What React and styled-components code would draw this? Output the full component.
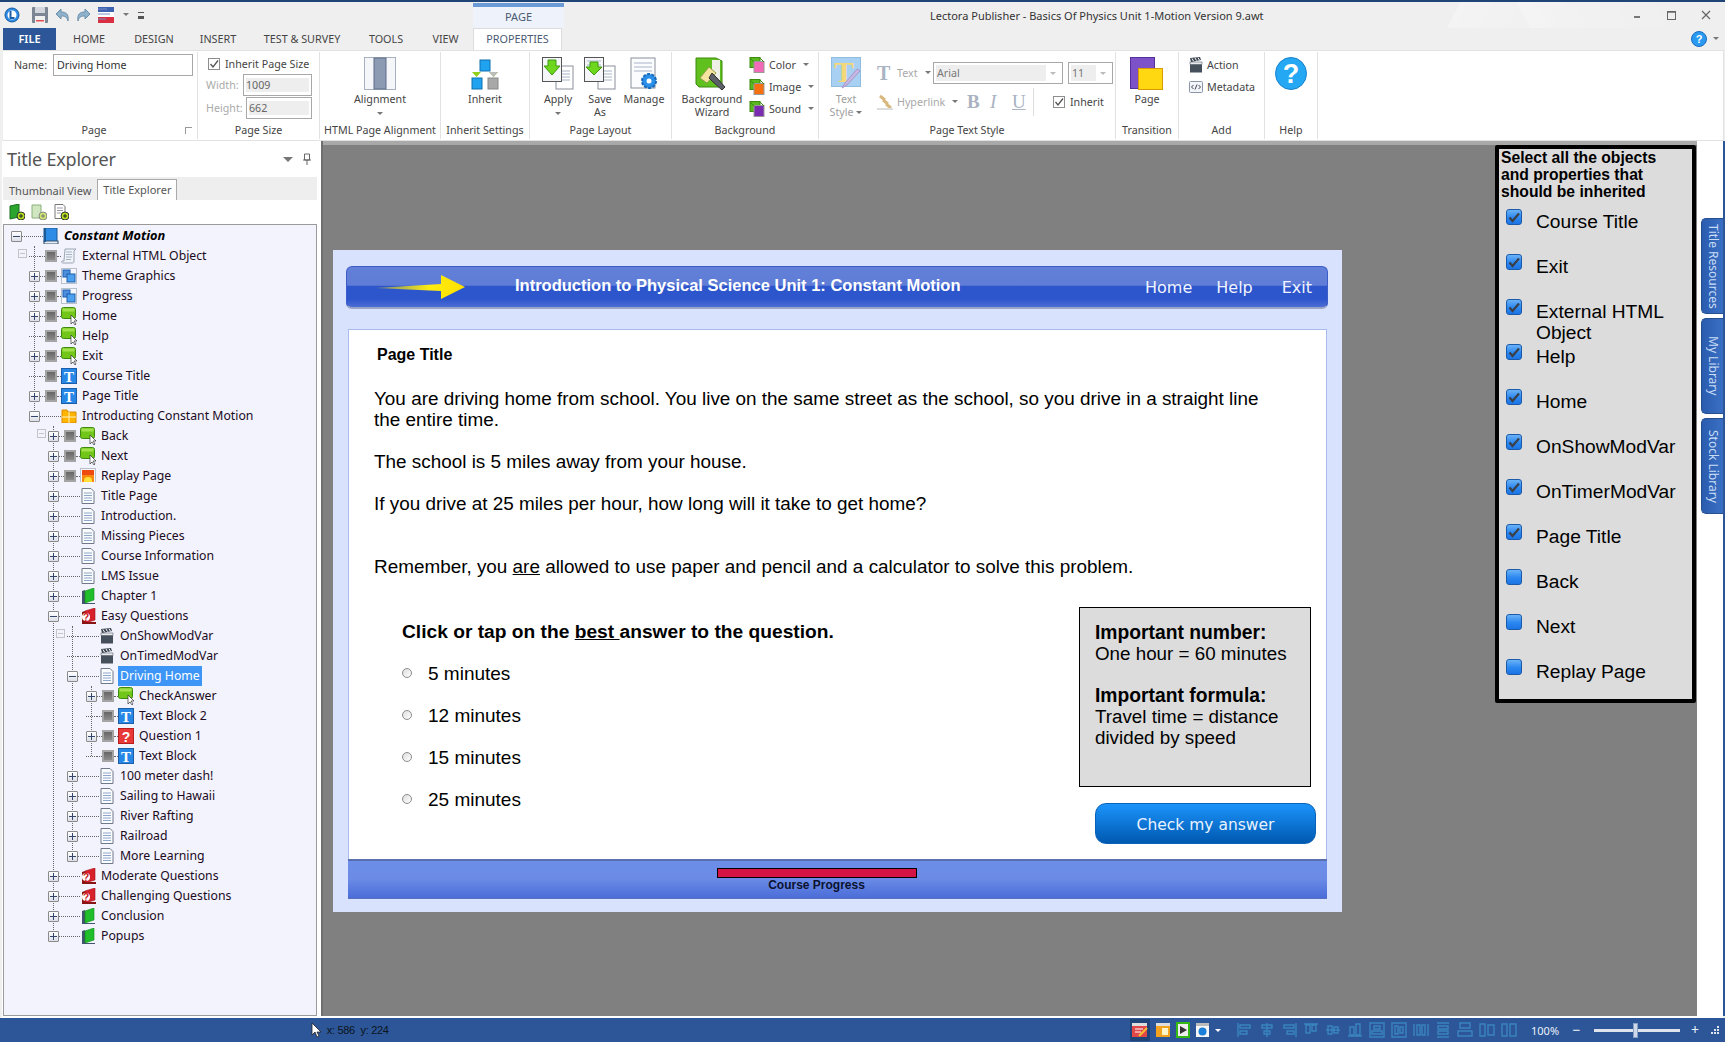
import React from "react";
import styled, { createGlobalStyle } from "styled-components";

const GlobalStyle = createGlobalStyle`
  html, body { margin: 0; padding: 0; background: #2c5697; }
  * { box-sizing: border-box; }
`;

const UI_FONT = `"Noto Sans", "Liberation Sans", sans-serif`;
const PAGE_FONT = `"Liberation Sans", Arial, sans-serif`;
const THEME_FONT = `"DejaVu Sans", "Noto Sans", sans-serif`;
const SERIF_FONT = `"Liberation Serif", serif`;

/* ---------- window shell ---------- */

const Shell = styled.div`
  width: 1725px;
  height: 1042px;
  display: flex;
  flex-direction: column;
  overflow: hidden;
  background: #efefef;
  border-top: 2px solid #1f4478;
  font-family: ${UI_FONT};
  font-size: 10.7px;
  color: #444;
`;

const TitleBar = styled.div`
  height: 26px;
  display: flex;
  align-items: flex-start;
  padding-left: 4px;
  background:
    linear-gradient(118deg, transparent 84%, rgba(255, 255, 255, 0.3) 84%, rgba(255, 255, 255, 0.05) 90%, transparent 90%),
    linear-gradient(62deg, transparent 88%, rgba(255, 255, 255, 0.25) 88%, rgba(255, 255, 255, 0.03) 96%, transparent 96%),
    #efefef;
`;

const QuickBar = styled.div`
  width: 469px;
  height: 26px;
  display: flex;
  align-items: center;
  gap: 6px;
`;

const QuickGap = styled.span`
  width: 0;
`;

const MoreGlyph = styled.span`
  width: 6px;
  height: 7px;
  margin-left: 3px;
  border-top: 1px solid #555;
  border-bottom: 3px solid #555;
`;

const ContextTab = styled.div`
  width: 91px;
  height: 25px;
  margin-top: 1px;
  background: #eef3fb;
  border-top: 4px solid #6a9bd6;
  text-align: center;
  line-height: 19px;
  font-size: 11px;
  color: #4a5a72;
`;

const WindowTitle = styled.div`
  margin-left: 366px;
  width: 460px;
  line-height: 28px;
  font-size: 11px;
  color: #333;
  white-space: nowrap;
`;

const WindowButtons = styled.div`
  margin-left: auto;
  display: flex;
  padding-right: 12px;
  gap: 20px;
  height: 26px;
  align-items: center;
`;

const TabRow = styled.div`
  height: 22px;
  display: flex;
  padding-left: 3px;
  background: #efefef;
`;

const FileTab = styled.div`
  width: 53px;
  background: #2c5697;
  color: #fff;
  text-align: center;
  line-height: 21px;
  font-size: 11px;
  font-weight: 600;
`;

const Tab = styled.div`
  width: ${(p) => p.$w}px;
  text-align: center;
  line-height: 21px;
  font-size: 10.8px;
  color: #444;
  ${(p) => p.$active && `
    background: #fff;
    border: 1px solid #dcdcdc;
    border-bottom: 0;
    line-height: 20px;
    color: #4a5a72;
  `}
`;

const TabRight = styled.div`
  margin-left: auto;
  padding-right: 6px;
  display: flex;
  align-items: center;
  gap: 3px;
`;

const Ribbon = styled.div`
  height: 91px;
  margin: 0 1px 0 3px;
  display: flex;
  padding-top: 1px;
  background: #fff;
  border: 1px solid #e2e2e2;
  border-left: 0;
`;

const Group = styled.div`
  width: ${(p) => p.$w}px;
  height: 87px;
  display: flex;
  flex-direction: column;
  border-right: 1px solid #e2e2e2;
  position: relative;
`;

const GroupBody = styled.div`
  flex: 1;
  display: flex;
  justify-content: ${(p) => p.$justify || "flex-start"};
  min-height: 0;
`;

const GroupLabel = styled.div`
  height: 18px;
  line-height: 19px;
  text-align: center;
  font-size: 10.7px;
  color: #444;
  padding-right: ${(p) => p.$pr || 0}px;
  white-space: nowrap;
`;

const Launcher = styled.div`
  position: absolute;
  right: 5px;
  bottom: 5px;
  width: 7px;
  height: 7px;
  border-left: 1px solid #999;
  border-top: 1px solid #999;
`;

const LargeButton = styled.div`
  width: ${(p) => p.$w || 50}px;
  margin-left: ${(p) => p.$ml || 0}px;
  display: flex;
  flex-direction: column;
  align-items: center;
  padding-top: 5px;
  font-size: 10.7px;
  line-height: 13px;
  text-align: center;
  color: ${(p) => (p.$dim ? "#a0a0a0" : "#444")};
  svg { margin-bottom: 3px; flex: none; }
`;

const Caret = styled.span`
  display: inline-block;
  width: 0;
  height: 0;
  margin: ${(p) => p.$margin || "0 0 2px 3px"};
  border-left: ${(p) => p.$size || 3}px solid transparent;
  border-right: ${(p) => p.$size || 3}px solid transparent;
  border-top: ${(p) => p.$size || 3}px solid ${(p) => p.$color || "#777"};
  vertical-align: middle;
`;

const NameField = styled.div`
  display: flex;
  align-items: flex-start;
  padding: 2px 0 0 11px;
  line-height: 22px;
`;

const NameLabel = styled.span`
  width: 39px;
`;

const TextInput = styled.div`
  width: 140px;
  height: 22px;
  padding-left: 3px;
  border: 1px solid #a8a8a8;
  color: #333;
  line-height: 20px;
`;

const SizeForm = styled.div`
  flex: 1;
  padding: 5px 7px 0 8px;
`;

const CheckRow = styled.div`
  display: flex;
  align-items: center;
  gap: 5px;
  padding-left: ${(p) => (p.$flush ? 0 : 2)}px;
  height: 14px;
  white-space: nowrap;
  font-size: 10.7px;
`;

const SmallCheck = styled.span`
  width: 12px;
  height: 12px;
  flex: none;
  border: 1px solid #8e8e8e;
  background: #fff;
  display: flex;
  align-items: center;
  justify-content: center;
`;

const SizeRow = styled.div`
  display: flex;
  justify-content: space-between;
  align-items: center;
  height: 22px;
  margin-top: ${(p) => p.$mt || 0}px;
  color: #aaa;
  font-size: 10.7px;
`;

const SizeInput = styled.div`
  width: ${(p) => p.$w}px;
  height: 22px;
  border: 1px solid #a8a8a8;
  padding: 3px 2px;
  div {
    height: 14px;
    line-height: 14px;
    background: #eee;
    color: #666;
  }
`;

const SmallStack = styled.div`
  display: flex;
  flex-direction: column;
  gap: 6px;
  padding-top: ${(p) => p.$pt || 5}px;
  margin-left: ${(p) => p.$ml || 0}px;
`;

const SmallItem = styled.div`
  display: flex;
  align-items: center;
  gap: 4px;
  height: 16px;
  width: ${(p) => (p.$w ? `${p.$w}px` : "auto")};
  font-size: 10.7px;
  line-height: 16px;
  white-space: nowrap;
  color: ${(p) => (p.$dim ? "#a8a8a8" : "#444")};
`;

const FontControls = styled.div`
  display: flex;
  flex-direction: column;
  margin-left: 6px;
`;

const FontRow = styled.div`
  display: flex;
  align-items: center;
  height: 22px;
  margin-top: ${(p) => p.$mt || 0}px;
`;

const ComboBox = styled.div`
  width: ${(p) => p.$w}px;
  height: 22px;
  margin-left: ${(p) => p.$ml || 0}px;
  padding: 2px;
  display: flex;
  align-items: center;
  border: 1px solid #a8a8a8;
  color: #777;
  font-size: 10.7px;
`;

const ComboValue = styled.div`
  flex: 1;
  height: 16px;
  line-height: 16px;
  padding-left: 1px;
  background: #eee;
`;

const DimT = styled.span`
  width: 16px;
  font-family: ${SERIF_FONT};
  font-weight: 700;
  font-size: 20px;
  color: #a9b3c2;
`;

const FormatLetter = styled.span`
  font-family: ${SERIF_FONT};
  font-size: 19px;
  line-height: 22px;
  width: ${(p) => p.$w}px;
  color: #a9b3c2;
  font-weight: ${(p) => (p.$bold ? 700 : 400)};
  font-style: ${(p) => (p.$italic ? "italic" : "normal")};
  text-decoration: ${(p) => (p.$under ? "underline" : "none")};
`;

const VSep = styled.span`
  width: 1px;
  height: 28px;
  background: #ddd;
  margin-right: 19px;
`;

/* ---------- main area ---------- */

const Body = styled.div`
  flex: 1;
  display: flex;
  min-height: 0;
  margin-left: 2px;
  background: #fff;
`;

const ExplorerPanel = styled.div`
  width: 316px;
  flex: none;
  display: flex;
  flex-direction: column;
  background: #fff;
`;

const PanelHead = styled.div`
  height: 36px;
  padding: 0 6px 0 5px;
  display: flex;
  align-items: center;
  justify-content: space-between;
`;

const PanelTitle = styled.div`
  font-size: 18px;
  color: #555;
  font-weight: 400;
  letter-spacing: -0.2px;
`;

const PanelTools = styled.div`
  display: flex;
  align-items: center;
  gap: 9px;
`;

const ViewTabs = styled.div`
  height: 23px;
  margin: 0 1px;
  padding-left: 6px;
  display: flex;
  align-items: flex-end;
  background: #eeeeee;
`;

const ViewTab = styled.div`
  height: ${(p) => (p.$active ? 21 : 19)}px;
  line-height: 19px;
  padding: 0 5px 0 ${(p) => (p.$active ? 5 : 0)}px;
  font-size: 11px;
  color: #555;
  white-space: nowrap;
  ${(p) => p.$active && `
    background: #fff;
    border: 1px solid #aaa;
    border-bottom: 0;
    margin-left: 1px;
  `}
`;

const TreeTools = styled.div`
  height: 24px;
  padding: 4px 0 0 7px;
  display: flex;
  gap: 6px;
`;

const TreeBox = styled.div`
  flex: 1;
  margin: 0 1px;
  padding: 1px 0 0 7px;
  background: #f2f3fd;
  border: 1px solid #9a9a9a;
  overflow: hidden;
`;

const NodeWrap = styled.div`
  position: relative;
`;

const NodeKids = styled.div`
  position: relative;
  margin-left: ${(p) => p.$indent}px;
`;

const Guide = styled.div`
  position: absolute;
  left: 5px;
  top: 0;
  width: 0;
  border-left: 1px dotted #666;
`;

const Row = styled.div`
  position: relative;
  height: 20px;
  display: flex;
  align-items: center;
  white-space: nowrap;
  font-size: 12.25px;
  color: #200a1c;
`;

const Expander = styled.span`
  width: 11px;
  height: 11px;
  flex: none;
  position: relative;
  z-index: 1;
  border: 1px solid #8a8a8a;
  border-radius: 1px;
  background: linear-gradient(#fff, #dcdfe8);
  &::before {
    content: "";
    position: absolute;
    left: 1px;
    right: 1px;
    top: 4px;
    height: 1px;
    background: #34466b;
  }
  &::after {
    content: "";
    display: ${(p) => (p.$open ? "none" : "block")};
    position: absolute;
    top: 1px;
    bottom: 1px;
    left: 4px;
    width: 1px;
    background: #34466b;
  }
`;

const ExpanderGap = styled.span`
  width: 11px;
  height: 1px;
  flex: none;
  border-top: 1px dotted #666;
`;

const GhostBox = styled.span`
  position: absolute;
  left: -11px;
  top: 3px;
  width: 9px;
  height: 9px;
  border: 1px solid #c4c4c8;
  &::before {
    content: "";
    position: absolute;
    left: 1px;
    right: 1px;
    top: 3px;
    height: 1px;
    background: #c4c4c8;
  }
`;

const Stem = styled.span`
  width: ${(p) => p.$w}px;
  height: 1px;
  flex: none;
  border-top: 1px dotted #666;
`;

const VisBox = styled.span`
  width: 12px;
  height: 12px;
  flex: none;
  border: 2px solid #a4a4a4;
  background: linear-gradient(#666, #8c8c8c);
`;

const IconSlot = styled.span`
  width: 16px;
  flex: none;
  display: flex;
  justify-content: center;
`;

const NodeLabel = styled.span`
  margin-left: 3px;
  padding: 0 2px;
  height: 20px;
  line-height: 19px;
  font-size: ${(p) => (p.$root ? "12.8px" : "inherit")};
  font-weight: ${(p) => (p.$root ? 700 : 400)};
  font-style: ${(p) => (p.$root ? "italic" : "normal")};
  color: ${(p) => (p.$root ? "#000" : "inherit")};
  ${(p) => p.$selected && `
    background: #3d95f5;
    color: #fff;
  `}
`;

const Divider = styled.div`
  width: 5px;
  flex: none;
  background: #fff;
  border-right: 2px solid #6f6f6f;
`;

const Canvas = styled.div`
  position: relative;
  flex: none;
  width: 1374px;
  padding: 105px 0 0 10px;
  background: #808080;
  border-top: 4px solid #a9a9a9;
`;

const CoursePage = styled.div`
  width: 1009px;
  height: 662px;
  padding: 16px 0 0 13px;
  background: #d9e2fd;
`;

const HeaderBar = styled.div`
  width: 982px;
  height: 43px;
  display: flex;
  align-items: center;
  position: relative;
  padding-left: 28px;
  border: 1px solid #3c5dc8;
  border-bottom: 2px solid #9aa4c4;
  border-radius: 6px;
  background: linear-gradient(#6280d8 0%, #5f7dd6 46%, #2d55cc 47%, #2d55cc 80%, #4d6dd4 100%);
`;

const CourseName = styled.div`
  margin-left: 50px;
  width: 630px;
  padding-bottom: 4px;
  font-family: ${PAGE_FONT};
  font-weight: 700;
  font-size: 16.5px;
  color: #fff;
  white-space: nowrap;
`;

const HeaderLink = styled.div`
  margin-left: ${(p) => p.$ml}px;
  font-family: ${THEME_FONT};
  font-size: 16px;
  color: #f0f4ff;
  white-space: nowrap;
`;

const Content = styled.div`
  width: 979px;
  height: 530px;
  margin: 20px 0 0 2px;
  padding: 15px 0 0 25px;
  display: flex;
  flex-direction: column;
  background: #fff;
  border: 1px solid #a8bcf0;
  border-bottom: 0;
  font-family: ${PAGE_FONT};
  color: #000;
`;

const PageHeading = styled.div`
  margin-left: 3px;
  font-size: 16px;
  line-height: 20px;
  font-weight: 700;
`;

const Prose = styled.div`
  width: 905px;
  margin-top: 23px;
  font-size: 18.9px;
  line-height: 21px;
`;

const ProseP = styled.p`
  margin: 0 0 ${(p) => p.$after ?? 21}px;
`;

const LowerArea = styled.div`
  display: flex;
  justify-content: space-between;
  margin-top: 30px;
  padding-right: 10px;
`;

const Quiz = styled.div`
  padding: 14px 0 0 28px;
`;

const QuizPrompt = styled.div`
  font-size: 19.2px;
  line-height: 21px;
  font-weight: 700;
  margin-bottom: 11px;
`;

const QuizOption = styled.div`
  height: 42px;
  display: flex;
  align-items: center;
  font-size: 19px;
`;

const Radio = styled.span`
  width: 10px;
  height: 10px;
  margin-right: 16px;
  margin-top: -3px;
  border-radius: 50%;
  border: 1px solid #8c8c8c;
  background: linear-gradient(135deg, #ddd, #fff);
`;

const SideColumn = styled.div`
  width: 237px;
  display: flex;
  flex-direction: column;
`;

const HintBox = styled.div`
  width: 232px;
  height: 180px;
  padding: 14px 15px;
  border: 1px solid #000;
  background: #dcdcdc;
  font-size: 18.8px;
  line-height: 21px;
`;

const HintBlock = styled.div`
  margin-bottom: 21px;
  b { display: block; font-size: 19.3px; }
`;

const CheckButton = styled.div`
  width: 221px;
  height: 41px;
  margin: 16px 0 0 16px;
  border-radius: 11px;
  background: linear-gradient(#1b93fb, #0059b0);
  border: 1px solid #0a62b8;
  font-family: ${THEME_FONT};
  font-size: 15.5px;
  line-height: 42px;
  text-align: center;
  color: #eaf2ff;
`;

const ProgressFooter = styled.div`
  width: 979px;
  height: 40px;
  margin-left: 2px;
  padding-top: 7px;
  display: flex;
  flex-direction: column;
  align-items: center;
  background: linear-gradient(#6d8ee8 0%, #6a8ae6 50%, #4a6dd8 100%);
  border-top: 2px solid #5a6fb0;
  border-bottom: 1px solid #5a70c0;
  font-family: ${PAGE_FONT};
`;

const ProgressTrack = styled.div`
  width: 200px;
  height: 10px;
  margin-left: -42px;
  border: 1px solid #000;
  background: #d41444;
`;

const ProgressLabel = styled.div`
  margin-left: -42px;
  font-size: 12px;
  line-height: 14px;
  font-weight: 700;
  color: #0b1230;
`;

const InheritPanel = styled.div`
  position: absolute;
  top: 0;
  right: 1px;
  width: 201px;
  height: 558px;
  padding-left: 2px;
  background: #dcdcdc;
  border: 4px solid #000;
  border-radius: 2px;
  font-family: ${PAGE_FONT};
  color: #000;
`;

const InheritHead = styled.div`
  height: 60px;
  font-size: 15.7px;
  line-height: 17px;
  font-weight: 700;
`;

const InheritRow = styled.div`
  height: 45px;
  display: flex;
  padding-left: 5px;
  font-size: 19.2px;
  line-height: 21px;
`;

const InheritLabel = styled.div`
  width: 146px;
  padding-top: 2px;
`;

const BlueCheck = styled.span`
  width: 16px;
  height: 16px;
  flex: none;
  margin-right: 14px;
  border: 1px solid #1a5aa8;
  border-radius: 3px;
  background: linear-gradient(#6ab2f8, #2a87f0 55%, #1c74e4);
  display: flex;
  align-items: center;
  justify-content: center;
`;

const ToolRail = styled.div`
  flex: 1;
  padding: 77px 0 0 4px;
  display: flex;
  flex-direction: column;
  gap: 4px;
  background: #fff;
  border-right: 2px solid #2c5697;
`;

const RailTab = styled.div`
  height: ${(p) => p.$h}px;
  width: 22px;
  display: flex;
  justify-content: center;
  writing-mode: vertical-rl;
  border: 1px solid #264f90;
  border-right: 0;
  border-radius: 5px 0 0 5px;
  background: linear-gradient(90deg, #2a5cae, #3a70c4);
  color: #c8dcf6;
  font-size: 12px;
  line-height: 20px;
  white-space: nowrap;
`;

const StatusGap = styled.div`
  height: 2px;
  background: #fff;
  margin: 0 2px;
`;

const StatusBar = styled.div`
  height: 24px;
  display: flex;
  align-items: center;
  background: #2c5697;
  color: #fff;
`;

const CursorReadout = styled.div`
  display: flex;
  align-items: center;
  gap: 3px;
  margin-left: 311px;
  width: 819px;
  padding-bottom: 1px;
  font-family: ${PAGE_FONT};
  font-size: 11px;
  letter-spacing: -0.3px;
  color: #0c1420;
  white-space: pre;
`;

const StatusIcons = styled.div`
  display: flex;
  align-items: center;
  gap: 6px;
  width: 107px;
`;

const StatusIconCell = styled.span`
  display: flex;
  align-items: center;
  justify-content: center;
  height: 22px;
  padding: 0 ${(p) => (p.$active ? 2 : 0)}px;
  background: ${(p) => (p.$active ? "#1f4478" : "transparent")};
`;

const AlignIcons = styled.div`
  display: flex;
  gap: 6px;
  width: 294px;
`;

const ZoomArea = styled.div`
  display: flex;
  align-items: center;
  font-size: 11px;
  color: #eaf0fa;
`;

const ZoomSymbol = styled.span`
  width: ${(p) => p.$w}px;
  text-align: center;
  font-size: 14px;
  line-height: 14px;
`;

const ZoomTrack = styled.div`
  position: relative;
  width: 86px;
  height: 3px;
  background: #dfe4ec;
`;

const ZoomThumb = styled.span`
  position: absolute;
  left: 39px;
  top: -6px;
  width: 5px;
  height: 15px;
  background: #cfd9ea;
  border: 1px solid #8aa0c4;
`;

/* ---------- icons ---------- */

const Svg = styled.svg`
  display: block;
  flex: none;
`;

const Icon16 = ({ w = 16, h = 16, vb, children }) => (
  <Svg width={w} height={h} viewBox={vb || `0 0 ${w} ${h}`}>
    {children}
  </Svg>
);

const BookIcon = () => (
  <Icon16>
    <rect x="1" y="0" width="13" height="14" fill="#2e8be6" stroke="#1c5a96" />
    <rect x="1" y="13" width="14" height="3" fill="#e8eef6" stroke="#34506e" />
    <rect x="1" y="0" width="2" height="14" fill="#1c5a96" />
  </Icon16>
);
const ScriptIcon = () => (
  <Icon16>
    <path d="M4 1h11l-2 2v10c0 2-1 2-2 2H2c-1 0-2-1-1-2h2z" fill="#f0f3f8" stroke="#9aa5b5" />
    <path d="M5 4h6M5 6.5h6M5 9h6M5 11.5h5" stroke="#a6b3c6" />
  </Icon16>
);
const GroupIcon = () => (
  <Icon16>
    <rect x=".5" y=".5" width="15" height="15" fill="#f4f6fb" stroke="#b8c0cc" />
    <rect x="2" y="2" width="7" height="7" fill="#4d8fdc" stroke="#1e5fb0" />
    <rect x="6" y="6" width="8" height="8" fill="#4da0ee" stroke="#1e5fb0" />
  </Icon16>
);
const ButtonIcon = () => (
  <Icon16 h={18} w={17}>
    <rect x=".5" y=".5" width="14" height="11" rx="2" fill="#72c61a" stroke="#3d8a0c" />
    <rect x="1.5" y="1.5" width="12" height="3" fill="#a2e04e" />
    <path d="M10 8l0 9 2-2 2 3 1-1-2-3h3z" fill="#fff" stroke="#333" strokeWidth=".7" />
  </Icon16>
);
const TextIcon = () => (
  <Icon16>
    <rect x=".5" y=".5" width="15" height="15" fill="#2787e6" stroke="#1c5fa8" />
    <text x="8" y="13.5" textAnchor="middle" fontFamily="Liberation Serif, serif" fontSize="15" fontWeight="700" fill="#fff">T</text>
  </Icon16>
);
const LayoutIcon = () => (
  <Icon16 h={14}>
    <path d="M1 1h5l1 2h8v11H1z" fill="#ffb400" stroke="#d98a00" />
    <path d="M1 8h14M8 3v11" stroke="#fff2c4" />
  </Icon16>
);
const SunIcon = () => (
  <Icon16>
    <rect x=".5" y=".5" width="15" height="15" fill="#f4f6fb" stroke="#b8c0cc" />
    <rect x="2" y="2" width="12" height="12" fill="#ee4a10" />
    <rect x="2" y="7" width="12" height="7" fill="#f98a10" />
    <circle cx="8" cy="13" r="4" fill="#ffe03a" />
    <rect x="0" y="14" width="16" height="2" fill="#f4f6fb" />
  </Icon16>
);
const PageIcon = () => (
  <Icon16 w={14}>
    <path d="M1 .5h9l3 3v12H1z" fill="#fbfcfe" stroke="#70798a" />
    <path d="M3 5h8M3 7.5h8M3 10h8M3 12.5h8" stroke="#8ea6cc" />
  </Icon16>
);
const ChapterIcon = () => (
  <Icon16 w={14}>
    <path d="M1 3l3-1v13H1z" fill="#42556e" />
    <path d="M4 3l9-3v12l-9 3z" fill="#1fbe2a" stroke="#0f8a18" strokeWidth=".6" />
    <path d="M1 15h13v1H1z" fill="#42556e" />
  </Icon16>
);
const QuestionBookIcon = () => (
  <Icon16 w={15}>
    <path d="M1 4l3-1v12H1z" fill="#8a1414" />
    <path d="M4 3l10-3v12l-10 3z" fill="#d8202a" stroke="#a01018" strokeWidth=".6" />
    <rect x="1" y="14" width="14" height="2" fill="#8a1414" />
    <circle cx="5" cy="9" r="4" fill="#fff" />
    <text x="5" y="12.5" textAnchor="middle" fontFamily="Liberation Sans, sans-serif" fontSize="10" fontWeight="700" fill="#c81820">?</text>
  </Icon16>
);
const ClapperIcon = ({ size = 14 }) => (
  <Icon16 w={size} h={size + 2} vb="0 0 14 16">
    <path d="M1 1l10-1 1 3L2 5z" fill="#3c4652" />
    <path d="M3 1.5l1.5 2.5M6 1l1.5 2.5M9 .8l1.5 2.4" stroke="#fff" />
    <rect x="1" y="5" width="12" height="2.5" fill="#e8eaee" stroke="#3c4652" strokeWidth=".5" />
    <rect x="1" y="7.5" width="12" height="8" fill="#46505c" />
  </Icon16>
);
const QuestionIcon = () => (
  <Icon16>
    <rect x=".5" y=".5" width="15" height="15" fill="#e83838" stroke="#b81e1e" />
    <text x="8" y="13.5" textAnchor="middle" fontFamily="Liberation Sans, sans-serif" fontSize="14" fontWeight="700" fill="#fff">?</text>
  </Icon16>
);

const nodeIcons = {
  book: BookIcon,
  script: ScriptIcon,
  group: GroupIcon,
  button: ButtonIcon,
  text: TextIcon,
  layout: LayoutIcon,
  sun: SunIcon,
  page: PageIcon,
  chapter: ChapterIcon,
  quiz: QuestionBookIcon,
  action: ClapperIcon,
  question: QuestionIcon,
};

const PageSheets = ({ children }) => (
  <Icon16 w={32} h={33}>
    <rect x="14" y="9" width="17" height="23" fill="#fff" stroke="#8a8f98" />
    <path d="M17 14h11M17 17h11M17 20h11M17 23h11" stroke="#a8b4c8" />
    <rect x=".5" y=".5" width="19" height="24" fill="#f4f6fa" stroke="#555" />
    {children}
  </Icon16>
);

const CheckMark = ({ color = "#555" }) => (
  <Icon16 w={10} h={10}>
    <path d="M1.5 5l2.5 3L9 1.5" fill="none" stroke={color} strokeWidth="1.3" />
  </Icon16>
);

const DarkCheck = () => (
  <Icon16 w={12} h={11}>
    <path d="M1.5 5.5l3 3.5L11 1.5" fill="none" stroke="#3a3f48" strokeWidth="2.2" />
  </Icon16>
);

const GreenTileIcon = ({ fill }) => (
  <Icon16>
    <rect x="1" y="0.5" width="10" height="10" fill="#58b81e" stroke="#3c8a10" />
    <rect x="5" y="4.5" width="10" height="11" fill={fill} stroke="#999" />
    <path d="M1 1l4 4M11 1l4 4" stroke="#3c8a10" />
  </Icon16>
);

const alignShapes = [
  "M1 1v14M3 3h10v3H3zM3 9h7v3H3z",
  "M8 1v14M3 3h10v3H3zM5 9h6v3H5z",
  "M15 1v14M3 3h10v3H3zM6 9h7v3H6z",
  "M1 2h14M3 3h4v8H3zM9 3h4v6H9z",
  "M1 8h14M3 4h4v8H3zM9 5h4v6H9z",
  "M1 14h14M3 5h4v8H3zM9 2h4v11H9z",
  "M1 1h14v14H1zM5 4h6v3H5zM3 9h10v3H3z",
  "M1 1h14v14H1zM4 4h3v8H4zM9 5h3v6H9z",
  "M1 2v12M15 2v12M4 3h3v10H4zM9 3h3v10H9z",
  "M2 1h12M2 15h12M3 4h10v3H3zM3 9h10v3H3z",
  "M3 1h10v5H3zM1 9h14v5H1z",
  "M1 2h5v12H1zM9 3h6v10H9z",
  "M1 2h5v12H1zM9 2h6v12H9z",
];

const AlignIcon = ({ d }) => (
  <Icon16>
    <path d={d} fill="none" stroke="#3a84bf" strokeWidth="1.4" />
  </Icon16>
);

/* ---------- data ---------- */

const tree = {
  label: "Constant Motion", icon: "book", root: true, open: true,
  kids: [
    { label: "External HTML Object", icon: "script", vis: true, ghost: true },
    { label: "Theme Graphics", icon: "group", vis: true, plus: true },
    { label: "Progress", icon: "group", vis: true, plus: true },
    { label: "Home", icon: "button", vis: true, plus: true },
    { label: "Help", icon: "button", vis: true },
    { label: "Exit", icon: "button", vis: true, plus: true },
    { label: "Course Title", icon: "text", vis: true },
    { label: "Page Title", icon: "text", vis: true, plus: true },
    {
      label: "Introducting Constant Motion", icon: "layout", open: true,
      kids: [
        { label: "Back", icon: "button", vis: true, plus: true, ghost: true },
        { label: "Next", icon: "button", vis: true, plus: true },
        { label: "Replay Page", icon: "sun", vis: true, plus: true },
        { label: "Title Page", icon: "page", plus: true },
        { label: "Introduction.", icon: "page", plus: true },
        { label: "Missing Pieces", icon: "page", plus: true },
        { label: "Course Information", icon: "page", plus: true },
        { label: "LMS Issue", icon: "page", plus: true },
        { label: "Chapter 1", icon: "chapter", plus: true },
        {
          label: "Easy Questions", icon: "quiz", open: true,
          kids: [
            { label: "OnShowModVar", icon: "action", ghost: true },
            { label: "OnTimedModVar", icon: "action" },
            {
              label: "Driving Home", icon: "page", open: true, selected: true,
              kids: [
                { label: "CheckAnswer", icon: "button", vis: true, plus: true },
                { label: "Text Block 2", icon: "text", vis: true },
                { label: "Question 1", icon: "question", vis: true, plus: true },
                { label: "Text Block", icon: "text", vis: true },
              ],
            },
            { label: "100 meter dash!", icon: "page", plus: true },
            { label: "Sailing to Hawaii", icon: "page", plus: true },
            { label: "River Rafting", icon: "page", plus: true },
            { label: "Railroad", icon: "page", plus: true },
            { label: "More Learning", icon: "page", plus: true },
          ],
        },
        { label: "Moderate Questions", icon: "quiz", plus: true },
        { label: "Challenging Questions", icon: "quiz", plus: true },
        { label: "Conclusion", icon: "chapter", plus: true },
        { label: "Popups", icon: "chapter", plus: true },
      ],
    },
  ],
};

const inheritItems = [
  ["Course Title", true],
  ["Exit", true],
  ["External HTML Object", true],
  ["Help", true],
  ["Home", true],
  ["OnShowModVar", true],
  ["OnTimerModVar", true],
  ["Page Title", true],
  ["Back", false],
  ["Next", false],
  ["Replay Page", false],
];

const countRows = (node) => 1 + (node.kids || []).reduce((sum, kid) => sum + countRows(kid), 0);

const TreeNode = ({ node, depth = 0 }) => {
  const Icon = nodeIcons[node.icon];
  const kids = node.kids || [];
  const guideHeight = kids.slice(0, -1).reduce((sum, kid) => sum + countRows(kid) * 20, 0) + 10;

  return (
    <NodeWrap>
      <Row>
        {node.ghost && <GhostBox />}
        {node.plus || node.open ? <Expander $open={node.open} /> : <ExpanderGap />}
        {node.vis ? (
          <>
            <Stem $w={5} />
            <VisBox />
            <Stem $w={4} />
          </>
        ) : (
          <Stem $w={21} />
        )}
        <IconSlot><Icon /></IconSlot>
        <NodeLabel $root={node.root} $selected={node.selected}>{node.label}</NodeLabel>
      </Row>
      {kids.length > 0 && (
        <NodeKids $indent={depth === 0 ? 18 : 19}>
          <Guide style={{ height: guideHeight }} />
          {kids.map((kid) => (
            <TreeNode key={kid.label} node={kid} depth={depth + 1} />
          ))}
        </NodeKids>
      )}
    </NodeWrap>
  );
};

/* ---------- page ---------- */

const TitleRow = () => (
  <TitleBar>
    <QuickBar>
      <Icon16 w={16} h={18}>
        <circle cx="8" cy="9" r="7" fill="#2e8be6" stroke="#155a9e" />
        <circle cx="8" cy="9" r="4.5" fill="#fff" />
        <path d="M6.5 5v7h4" fill="none" stroke="#1a5fa8" strokeWidth="2" />
      </Icon16>
      <QuickGap />
      <Icon16>
        <rect x="0" y="0" width="16" height="16" rx="1" fill="#7b8594" />
        <rect x="3" y="0" width="10" height="6" fill="#d4d8de" />
        <rect x="3" y="9" width="10" height="7" fill="#f0f0f0" />
        <rect x="4" y="13" width="8" height="1.5" fill="#e05050" />
      </Icon16>
      <Icon16>
        <path d="M2 7l5-5v3c5 0 8 2 7 9-1-4-3-5-7-5v3z" fill="#8fb2cc" stroke="#6d90aa" />
      </Icon16>
      <Icon16>
        <path d="M14 7L9 2v3C4 5 1 7 2 14c1-4 3-5 7-5v3z" fill="#8fb2cc" stroke="#6d90aa" />
      </Icon16>
      <Icon16>
        <rect x="0" y="0" width="16" height="5" fill="#3c62b0" />
        <rect x="0" y="5" width="16" height="5" fill="#fff" />
        <rect x="0" y="10" width="16" height="6" fill="#d83040" />
        <path d="M0 2h9M0 7h12M0 12h8" stroke="#7a8fc8" />
      </Icon16>
      <Caret />
      <MoreGlyph />
    </QuickBar>
    <ContextTab>PAGE</ContextTab>
    <WindowTitle>Lectora Publisher - Basics Of Physics Unit 1-Motion Version 9.awt</WindowTitle>
    <WindowButtons>
      <Icon16 w={14} h={14}><rect x="3" y="8" width="6" height="2" fill="#777" /></Icon16>
      <Icon16 w={14} h={14}><rect x="2.5" y="3.5" width="8" height="8" fill="none" stroke="#666" strokeWidth="1" /><path d="M2.5 4h8" stroke="#666" strokeWidth="1.5" /></Icon16>
      <Icon16 w={14} h={14}><path d="M3 3l8 8M11 3l-8 8" stroke="#666" strokeWidth="1.2" /></Icon16>
    </WindowButtons>
  </TitleBar>
);

const TabsRow = () => (
  <TabRow>
    <FileTab>FILE</FileTab>
    <Tab $w={66}>HOME</Tab>
    <Tab $w={64}>DESIGN</Tab>
    <Tab $w={64}>INSERT</Tab>
    <Tab $w={104}>TEST &amp; SURVEY</Tab>
    <Tab $w={64}>TOOLS</Tab>
    <Tab $w={55}>VIEW</Tab>
    <Tab $w={89} $active>PROPERTIES</Tab>
    <TabRight>
      <Icon16>
        <circle cx="8" cy="8" r="7.5" fill="#2a9af0" stroke="#1a6cc0" />
        <text x="8" y="12" textAnchor="middle" fontFamily="Liberation Sans, sans-serif" fontSize="11" fontWeight="700" fill="#fff">?</text>
      </Icon16>
      <Caret />
    </TabRight>
  </TabRow>
);

const RibbonBar = () => (
  <Ribbon>
    <Group $w={195}>
      <GroupBody>
        <NameField>
          <NameLabel>Name:</NameLabel>
          <TextInput>Driving Home</TextInput>
        </NameField>
      </GroupBody>
      <GroupLabel $pr={12}>Page</GroupLabel>
      <Launcher />
    </Group>

    <Group $w={122}>
      <GroupBody>
        <SizeForm>
          <CheckRow>
            <SmallCheck><CheckMark /></SmallCheck>
            Inherit Page Size
          </CheckRow>
          <SizeRow $mt={3}>
            Width:
            <SizeInput $w={69}><div>1009</div></SizeInput>
          </SizeRow>
          <SizeRow $mt={1}>
            Height:
            <SizeInput $w={66}><div>662</div></SizeInput>
          </SizeRow>
        </SizeForm>
      </GroupBody>
      <GroupLabel>Page Size</GroupLabel>
    </Group>

    <Group $w={121}>
      <GroupBody $justify="center">
        <LargeButton $w={80}>
          <Icon16 w={32} h={33}>
            <rect x=".5" y=".5" width="31" height="32" fill="#f4f6fa" stroke="#a6b0c0" />
            <rect x="10" y="1" width="12" height="31" fill="#8c9bb2" stroke="#5e6e88" />
          </Icon16>
          Alignment
          <Caret $margin="6px 0 0" />
        </LargeButton>
      </GroupBody>
      <GroupLabel>HTML Page Alignment</GroupLabel>
    </Group>

    <Group $w={89}>
      <GroupBody $justify="center">
        <LargeButton $w={60}>
          <Icon16 w={28} h={33}>
            <rect x="9" y="3" width="10" height="11" fill="#1fa2f0" stroke="#1070b0" />
            <path d="M1 15h9l-4.5 5zM18 15h9l-4.5 5z" fill="#8ed01a" />
            <path d="M18 15h9l-4.5 5z" fill="#bcbcbc" />
            <rect x="1" y="21" width="10" height="11" fill="#1fa2f0" stroke="#1070b0" />
            <rect x="17" y="21" width="10" height="11" fill="#a8a8a8" stroke="#888" />
          </Icon16>
          Inherit
        </LargeButton>
      </GroupBody>
      <GroupLabel>Inherit Settings</GroupLabel>
    </Group>

    <Group $w={142}>
      <GroupBody>
        <LargeButton $w={46} $ml={5}>
          <PageSheets>
            <path d="M6 3h8v6h4l-8 9-8-9h4z" fill="#6fd61e" stroke="#3e9a0e" />
          </PageSheets>
          Apply
          <Caret $margin="6px 0 0" />
        </LargeButton>
        <LargeButton $w={38}>
          <PageSheets>
            <path d="M3 4h14M3 8h14" stroke="#a8b4c8" />
            <path d="M6 5h8v5h4l-8 8-8-8h4z" fill="#6fd61e" stroke="#3e9a0e" />
          </PageSheets>
          Save
          <br />
          As
        </LargeButton>
        <LargeButton $w={50}>
          <Icon16 w={32} h={33}>
            <rect x="3" y="1" width="24" height="30" fill="#fbfcfe" stroke="#8a8f98" />
            <path d="M6 6h18M6 10h18M6 14h18" stroke="#a8b4c8" />
            <circle cx="21" cy="24" r="7" fill="#2a8fe8" stroke="#1768b8" strokeWidth="2" strokeDasharray="3 1.4" />
            <circle cx="21" cy="24" r="2.5" fill="#fff" />
          </Icon16>
          Manage
        </LargeButton>
      </GroupBody>
      <GroupLabel>Page Layout</GroupLabel>
    </Group>

    <Group $w={147}>
      <GroupBody>
        <LargeButton $w={72} $ml={4}>
          <Icon16 w={34} h={33}>
            <path d="M1 1h20l6 3v26H4l-3-3z" fill="#5fc01e" stroke="#3c8a10" />
            <path d="M17 3h8v20H17z" fill="#eef0e8" />
            <path d="M5 21l9-11 7 6-9 10z" fill="#f4e4a0" stroke="#8fa048" />
            <path d="M17 16l5 5 8 9-3 3-9-8-4-4z" fill="#5a5f68" stroke="#333" />
          </Icon16>
          Background
          <br />
          Wizard
        </LargeButton>
        <SmallStack $pt={5} $ml={1}>
          <SmallItem><GreenTileIcon fill="#f06ab8" />Color<Caret /></SmallItem>
          <SmallItem><GreenTileIcon fill="#f57010" />Image<Caret /></SmallItem>
          <SmallItem><GreenTileIcon fill="#7a2cb0" />Sound<Caret /></SmallItem>
        </SmallStack>
      </GroupBody>
      <GroupLabel>Background</GroupLabel>
    </Group>

    <Group $w={297}>
      <GroupBody>
        <LargeButton $w={50} $dim $ml={2}>
          <Icon16 w={30} h={33}>
            <rect x=".5" y=".5" width="29" height="29" fill="#a8d0f2" stroke="#90bce0" />
            <text x="13" y="25" textAnchor="middle" fontFamily="Liberation Serif, serif" fontSize="30" fontWeight="700" fill="#f4d878">T</text>
            <path d="M11 31l3-5 12-14 3 2-13 14z" fill="#c6b6e4" stroke="#a898c8" />
          </Icon16>
          Text
          <br />
          <span>Style<Caret /></span>
        </LargeButton>
        <FontControls>
          <FontRow $mt={10}>
            <SmallItem $dim $w={56}>
              <DimT>T</DimT>
              Text<Caret />
            </SmallItem>
            <ComboBox $w={130}>
              <ComboValue>Arial</ComboValue>
              <Caret $color="#bbb" $margin="0 4px" />
            </ComboBox>
            <ComboBox $w={45} $ml={5}>
              <ComboValue>11</ComboValue>
              <Caret $color="#bbb" $margin="0 4px" />
            </ComboBox>
          </FontRow>
          <FontRow $mt={7}>
            <SmallItem $dim $w={90}>
              <Icon16>
                <path d="M3 2l5 4M6 6l5 4M9 10l5 4" stroke="#d8b87c" strokeWidth="3" />
                <rect x="0" y="14" width="16" height="2" fill="#ddd" />
              </Icon16>
              Hyperlink<Caret />
            </SmallItem>
            <FormatLetter $bold $w={23}>B</FormatLetter>
            <FormatLetter $italic $w={22}>I</FormatLetter>
            <FormatLetter $under $w={21}>U</FormatLetter>
            <VSep />
            <CheckRow $flush>
              <SmallCheck><CheckMark /></SmallCheck>
              Inherit
            </CheckRow>
          </FontRow>
        </FontControls>
      </GroupBody>
      <GroupLabel>Page Text Style</GroupLabel>
    </Group>

    <Group $w={63}>
      <GroupBody $justify="center">
        <LargeButton $w={50}>
          <Icon16 w={34} h={33}>
            <rect x=".5" y=".5" width="24" height="31" fill="#7d52c8" stroke="#55309a" />
            <rect x="8.5" y="11.5" width="24" height="21" fill="#ffd812" stroke="#d89a00" />
          </Icon16>
          Page
        </LargeButton>
      </GroupBody>
      <GroupLabel>Transition</GroupLabel>
    </Group>

    <Group $w={86}>
      <GroupBody>
        <SmallStack $pt={5} $ml={10}>
          <SmallItem><ClapperIcon size={14} />Action</SmallItem>
          <SmallItem>
            <Icon16 w={14} h={14}>
              <rect x=".5" y="1.5" width="13" height="11" rx="1" fill="#f2f5fa" stroke="#8a96a8" />
              <path d="M4.5 5L2.5 7l2 2M9.5 5l2 2-2 2M8 4.5L6 9.5" fill="none" stroke="#445" />
            </Icon16>
            Metadata
          </SmallItem>
        </SmallStack>
      </GroupBody>
      <GroupLabel>Add</GroupLabel>
    </Group>

    <Group $w={53}>
      <GroupBody $justify="center">
        <LargeButton $w={40}>
          <Icon16 w={32} h={33}>
            <ellipse cx="16" cy="16.5" rx="15.5" ry="16" fill="#24a8f4" stroke="#1a80cc" />
            <text x="16" y="26" textAnchor="middle" fontFamily="Liberation Sans, sans-serif" fontSize="27" fontWeight="700" fill="#fff">?</text>
          </Icon16>
        </LargeButton>
      </GroupBody>
      <GroupLabel>Help</GroupLabel>
    </Group>
  </Ribbon>
);

const Explorer = () => (
  <ExplorerPanel>
    <PanelHead>
      <PanelTitle>Title Explorer</PanelTitle>
      <PanelTools>
        <Caret $size={5} $margin="0" />
        <Icon16 w={10} h={12}>
          <path d="M2.5 1h5v6h-5zM1 7h8M5 7v5" fill="none" stroke="#666" />
        </Icon16>
      </PanelTools>
    </PanelHead>
    <ViewTabs>
      <ViewTab>Thumbnail View</ViewTab>
      <ViewTab $active>Title Explorer</ViewTab>
    </ViewTabs>
    <TreeTools>
      <Icon16><path d="M1 2l9-2v13l-9 2z" fill="#2ba52e" stroke="#1c6e1e" /><circle cx="12" cy="12" r="4" fill="#b6e020" stroke="#333" /><path d="M10 12h4M12 10v4" stroke="#222" /></Icon16>
      <Icon16><path d="M1 1h9v13H1z" fill="#cfe6c0" stroke="#8ab07a" /><circle cx="12" cy="12" r="4" fill="#cfe870" stroke="#888" /><path d="M10 12h4M12 10v4" stroke="#777" /></Icon16>
      <Icon16><path d="M2 .5h8l2 2v12H2z" fill="#fff" stroke="#777" /><path d="M4 4h6M4 6.5h6M4 9h4" stroke="#99a" /><circle cx="12" cy="12" r="4" fill="#b6e020" stroke="#333" /><path d="M10 12h4M12 10v4" stroke="#222" /></Icon16>
    </TreeTools>
    <TreeBox>
      <TreeNode node={tree} />
    </TreeBox>
  </ExplorerPanel>
);

const PagePreview = () => (
  <CoursePage>
    <HeaderBar>
      <Icon16 w={90} h={24}>
        <defs>
          <linearGradient id="arrowFade" x1="0" x2="1" y1="0" y2="0">
            <stop offset="0" stopColor="#ffe600" stopOpacity=".3" />
            <stop offset="0.6" stopColor="#ffec10" />
            <stop offset="1" stopColor="#ffe000" />
          </linearGradient>
        </defs>
        <path d="M0 13l66-4V0l24 12-24 12v-8z" fill="url(#arrowFade)" />
      </Icon16>
      <CourseName>Introduction to Physical Science Unit 1: Constant Motion</CourseName>
      <HeaderLink $ml={0}>Home</HeaderLink>
      <HeaderLink $ml={24}>Help</HeaderLink>
      <HeaderLink $ml={29}>Exit</HeaderLink>
    </HeaderBar>
    <Content>
      <PageHeading>Page Title</PageHeading>
      <Prose>
        <ProseP>You are driving home from school. You live on the same street as the school, so you drive in a straight line the entire time.</ProseP>
        <ProseP>The school is 5 miles away from your house.</ProseP>
        <ProseP $after={42}>If you drive at 25 miles per hour, how long will it take to get home?</ProseP>
        <ProseP $after={0}>Remember, you <u>are</u> allowed to use paper and pencil and a calculator to solve this problem.</ProseP>
      </Prose>
      <LowerArea>
        <Quiz>
          <QuizPrompt>Click or tap on the <u>best </u>answer to the question.</QuizPrompt>
          {["5 minutes", "12 minutes", "15 minutes", "25 minutes"].map((option) => (
            <QuizOption key={option}>
              <Radio />
              {option}
            </QuizOption>
          ))}
        </Quiz>
        <SideColumn>
          <HintBox>
            <HintBlock>
              <b>Important number:</b>
              One hour = 60 minutes
            </HintBlock>
            <HintBlock>
              <b>Important formula:</b>
              Travel time = distance divided by speed
            </HintBlock>
          </HintBox>
          <CheckButton>Check my answer</CheckButton>
        </SideColumn>
      </LowerArea>
    </Content>
    <ProgressFooter>
      <ProgressTrack />
      <ProgressLabel>Course Progress</ProgressLabel>
    </ProgressFooter>
  </CoursePage>
);

const InheritChooser = () => (
  <InheritPanel>
    <InheritHead>
      Select all the objects
      <br />
      and properties that
      <br />
      should be inherited
    </InheritHead>
    {inheritItems.map(([label, checked]) => (
      <InheritRow key={label}>
        <BlueCheck>{checked && <DarkCheck />}</BlueCheck>
        <InheritLabel>{label}</InheritLabel>
      </InheritRow>
    ))}
  </InheritPanel>
);

const Status = () => (
  <StatusBar>
    <CursorReadout>
      <Icon16 w={10} h={16}>
        <path d="M1 1v12l3-3 2 5 2-1-2-4h4z" fill="#fff" stroke="#222" strokeWidth=".8" />
      </Icon16>
      {" x: 586  y: 224"}
    </CursorReadout>
    <StatusIcons>
      <StatusIconCell $active>
        <Icon16>
          <rect x="0" y="1" width="15" height="14" fill="#e24848" />
          <rect x="0" y="1" width="15" height="3" fill="#ddd" />
          <path d="M3 7h8M3 10h6" stroke="#fff" />
          <path d="M7 14l8-8" stroke="#f2c230" strokeWidth="2" />
        </Icon16>
      </StatusIconCell>
      <StatusIconCell>
        <Icon16 w={14}>
          <rect x="0" y="1" width="14" height="14" fill="#f2a21e" />
          <rect x="0" y="1" width="14" height="3" fill="#ddd" />
          <rect x="6" y="6" width="6" height="7" fill="#fff3c8" />
        </Icon16>
      </StatusIconCell>
      <StatusIconCell>
        <Icon16 w={14}>
          <rect x="1" y="1" width="12" height="14" fill="#eee" stroke="#34b814" strokeWidth="2" />
          <path d="M4 4l7 4-7 4z" fill="#333" />
        </Icon16>
      </StatusIconCell>
      <StatusIconCell>
        <Icon16 w={13}>
          <rect x="0" y="1" width="13" height="14" fill="#f6f6f6" />
          <rect x="0" y="1" width="13" height="3" fill="#bbb" />
          <circle cx="6.5" cy="9.5" r="4" fill="#1a7fd8" />
        </Icon16>
      </StatusIconCell>
      <Caret $color="#fff" $margin="0" />
    </StatusIcons>
    <AlignIcons>
      {alignShapes.map((shape) => (
        <AlignIcon key={shape} d={shape} />
      ))}
    </AlignIcons>
    <ZoomArea>
      100%
      <ZoomSymbol $w={35}>−</ZoomSymbol>
      <ZoomTrack><ZoomThumb /></ZoomTrack>
      <ZoomSymbol $w={30}>+</ZoomSymbol>
      <Icon16 w={10} h={10}>
        <path d="M7 1h2v2H7zM4 4h2v2H4zM7 4h2v2H7zM1 7h2v2H1zM4 7h2v2H4zM7 7h2v2H7z" fill="#dfe6f2" />
      </Icon16>
    </ZoomArea>
  </StatusBar>
);

export default function App() {
  return (
    <>
      <GlobalStyle />
      <Shell>
        <TitleRow />
        <TabsRow />
        <RibbonBar />
        <Body>
          <Explorer />
          <Divider />
          <Canvas>
            <PagePreview />
            <InheritChooser />
          </Canvas>
          <ToolRail>
            <RailTab $h={96}>Title Resources</RailTab>
            <RailTab $h={96}>My Library</RailTab>
            <RailTab $h={96}>Stock Library</RailTab>
          </ToolRail>
        </Body>
        <StatusGap />
        <Status />
      </Shell>
    </>
  );
}
